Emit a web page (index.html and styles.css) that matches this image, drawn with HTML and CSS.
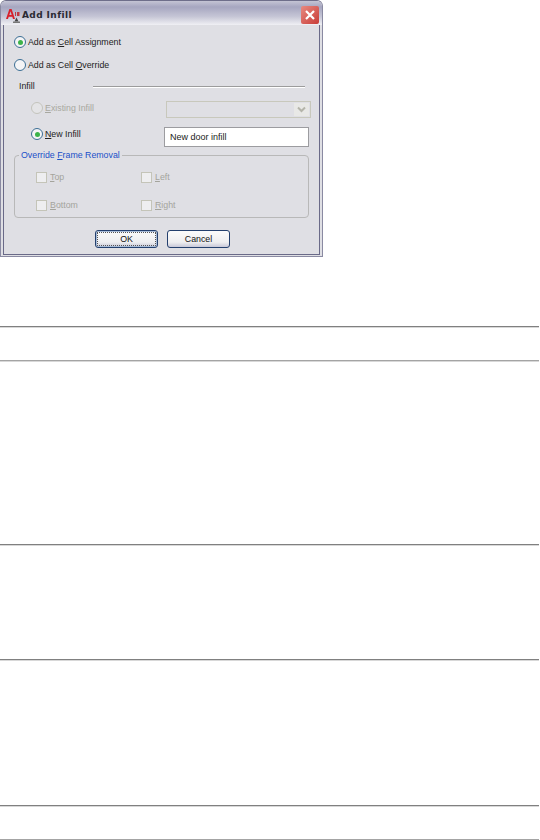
FILE: index.html
```html
<!DOCTYPE html>
<html lang="en">
<head>
<meta charset="utf-8">
<title>Add Infill</title>
<link rel="stylesheet" href="styles.css">
</head>
<body>
<section class="dialog">
  <header class="titlebar">
    <svg class="app-icon" width="14" height="15" viewBox="0 0 14 15">
      <path d="M0 11 L3.4 1 H5.6 L9 11 H7 L6.3 8.8 H2.7 L2 11 Z M3.3 7 H5.7 L4.5 3.2 Z" fill="#d8202a"/>
      <path d="M9 4 H10 V8 H9 Z M11 4 H13.5 V8 H11 Z" fill="#c03840"/>
      <path d="M8.5 13.5 L10.5 9.5 L12.5 13.5 Z" fill="#444"/>
      <rect x="7" y="13.5" width="7" height="1.5" fill="#777"/>
    </svg>
    <span class="title">Add Infill</span>
    <span class="close">
      <svg width="18" height="18" viewBox="0 0 18 18"><path d="M5 5 L13 13 M13 5 L5 13" stroke="#fff" stroke-width="2.2"/></svg>
    </span>
  </header>
  <div class="client">
    <label class="row-radio first"><span class="radio on"></span><span>Add as <u>C</u>ell Assignment</span></label>
    <label class="row-radio second"><span class="radio"></span><span>Add as Cell <u>O</u>verride</span></label>
    <div class="infill-head"><span class="infill-label">Infill</span><span class="rule"></span></div>
    <div class="infill-row existing">
      <label class="sub-radio muted"><span class="radio off"></span><span><u>E</u>xisting Infill</span></label>
      <div class="combo"><span class="combo-btn"><svg width="9" height="7" viewBox="0 0 9 7"><path d="M1 1.5 L4.5 5 L8 1.5" fill="none" stroke="#b4b4aa" stroke-width="2"/></svg></span></div>
    </div>
    <div class="infill-row fresh">
      <label class="sub-radio"><span class="radio on"></span><span><u>N</u>ew Infill</span></label>
      <div class="textbox">New door infill</div>
    </div>
    <fieldset class="group">
      <legend>Override <u>F</u>rame Removal</legend>
      <div class="checks">
        <label class="check"><span class="box"></span><span><u>T</u>op</span></label>
        <label class="check"><span class="box"></span><span><u>L</u>eft</span></label>
        <label class="check"><span class="box"></span><span><u>B</u>ottom</span></label>
        <label class="check"><span class="box"></span><span><u>R</u>ight</span></label>
      </div>
    </fieldset>
    <div class="buttons">
      <button class="btn default"><span>OK</span></button>
      <button class="btn"><span>Cancel</span></button>
    </div>
  </div>
</section>
<div class="rows">
  <div class="row h34"></div>
  <div class="row h184 soft"></div>
  <div class="row h115"></div>
  <div class="row h146"></div>
  <div class="row h34"></div>
  <div class="row end soft"></div>
</div>
</body>
</html>
```
FILE: styles.css
```css
html, body { margin: 0; padding: 0; background: #fff; }
body {
  width: 540px;
  height: 840px;
  overflow: hidden;
  font-family: "Liberation Sans", Arial, sans-serif;
  font-size: 8.8px;
  color: #222;
}
u { text-underline-offset: 1px; }
.dialog {
  box-sizing: border-box;
  width: 323px;
  height: 257px;
  background: #dfdfe4;
  border-radius: 6px 6px 0 0;
  border: 1px solid #8a8aa2;
  border-top-color: #6e6e8a;
  padding: 0 2px 2px;
  display: flex;
  flex-direction: column;
}
.titlebar {
  box-sizing: border-box;
  height: 24px;
  flex: none;
  margin: 0 -2px;
  padding: 4px 3px 0 5px;
  display: flex;
  align-items: center;
  gap: 2px;
  background: linear-gradient(#c4c4d4 0, #a6a6c0 25%, #c6c6d6 65%, #f0f0f4 100%);
  border-radius: 5px 5px 0 0;
}
.app-icon { flex: none; }
.title {
  font-family: "DejaVu Sans", sans-serif;
  font-weight: bold;
  font-size: 9px;
  letter-spacing: .4px;
  color: #2a2a33;
}
.close {
  margin-left: auto;
  width: 18px;
  height: 18px;
  border-radius: 2px;
  background: linear-gradient(135deg, #e88a80, #c83c38);
  display: flex;
}
.client {
  flex: 1;
  border: 1px solid #6a6a88;
  border-top: 0;
  padding: 0 11px 0 10px;
  display: flex;
  flex-direction: column;
  background: #dfdfe4;
  margin-bottom: -1px;
}
.row-radio { display: flex; align-items: center; gap: 2px; height: 12px; }
.first { margin-top: 11px; }
.second { margin-top: 11px; }
.radio {
  box-sizing: border-box;
  width: 12px;
  height: 12px;
  border-radius: 50%;
  border: 1px solid #3b6e94;
  background: #f4f4f6;
  flex: none;
  display: flex;
  align-items: center;
  justify-content: center;
}
.radio.on::after {
  content: "";
  width: 5px;
  height: 5px;
  border-radius: 50%;
  background: #3cb34a;
}
.radio.off { border-color: #c4c4bc; background: #e4e4e6; }
.infill-head {
  display: flex;
  align-items: center;
  margin: 9px 4px 0 5px;
  height: 12px;
}
.infill-label { flex: none; width: 74px; }
.rule {
  flex: none;
  width: 212px;
  height: 2px;
  margin-top: 2px;
  background: linear-gradient(#9c9c9c 50%, #fff 50%);
}
.infill-row { display: flex; align-items: flex-start; }
.existing { height: 18px; margin-top: 9px; }
.fresh { height: 20px; margin-top: 8px; }
.sub-radio { flex: none; display: flex; align-items: center; gap: 2px; margin: 1px 0 0 17px; width: 132px; }
.muted { color: #a8a8a0; }
.combo {
  box-sizing: border-box;
  flex: none;
  width: 145px;
  height: 17px;
  margin-left: 3px;
  border: 1px solid #c8c8bc;
  padding: 1px;
  display: flex;
  justify-content: flex-end;
}
.combo-btn {
  width: 15px;
  background: #e8e8e6;
  display: flex;
  align-items: center;
  justify-content: center;
}
.textbox {
  box-sizing: border-box;
  flex: none;
  width: 145px;
  height: 20px;
  margin-left: 1px;
  background: #fff;
  border: 1px solid #9c9ca0;
  padding-left: 5px;
  display: flex;
  align-items: center;
  font-size: 9px;
  color: #222;
}
.group {
  box-sizing: border-box;
  width: 295px;
  height: 69px;
  margin: 2px 0 0;
  padding: 0;
  border: 1px solid #b8b8b8;
  border-radius: 4px;
  min-width: 0;
}
.group legend {
  color: #1a50c8;
  padding: 0 2px;
  margin-left: 4px;
  line-height: 12px;
}
.checks {
  display: grid;
  grid-template-columns: 105px 1fr;
  grid-auto-rows: 12px;
  row-gap: 16px;
  margin: 10px 0 0 21px;
}
.check { display: flex; align-items: center; gap: 3px; color: #a4a49c; }
.box {
  box-sizing: border-box;
  width: 11px;
  height: 11px;
  background: #eeeef0;
  border: 1px solid #c4c4b8;
  flex: none;
}
.buttons {
  display: flex;
  gap: 9px;
  margin: 12px 0 0 81px;
}
.btn {
  box-sizing: border-box;
  width: 63px;
  height: 18px;
  padding: 0;
  font: inherit;
  color: #111;
  border: 1px solid #24406e;
  border-radius: 3px;
  background: linear-gradient(#fbfbfb, #eeeef0 70%, #c8c8d8);
  display: flex;
  align-items: center;
  justify-content: center;
}
.btn.default {
  box-shadow: inset 0 0 0 1px #a8bcd8;
  outline: 1px dotted #555;
  outline-offset: -3px;
}
.rows { margin-top: 69px; width: 539px; }
.row {
  box-sizing: border-box;
  border-top: 1px solid #808080;
  box-shadow: inset 0 1px 0 #d8d8d8;
}
.soft { border-top-color: #a4a4a4; }
.h34 { height: 34px; }
.h184 { height: 184px; }
.h115 { height: 115px; }
.h146 { height: 146px; }
.end { height: 1px; box-shadow: none; }
```
